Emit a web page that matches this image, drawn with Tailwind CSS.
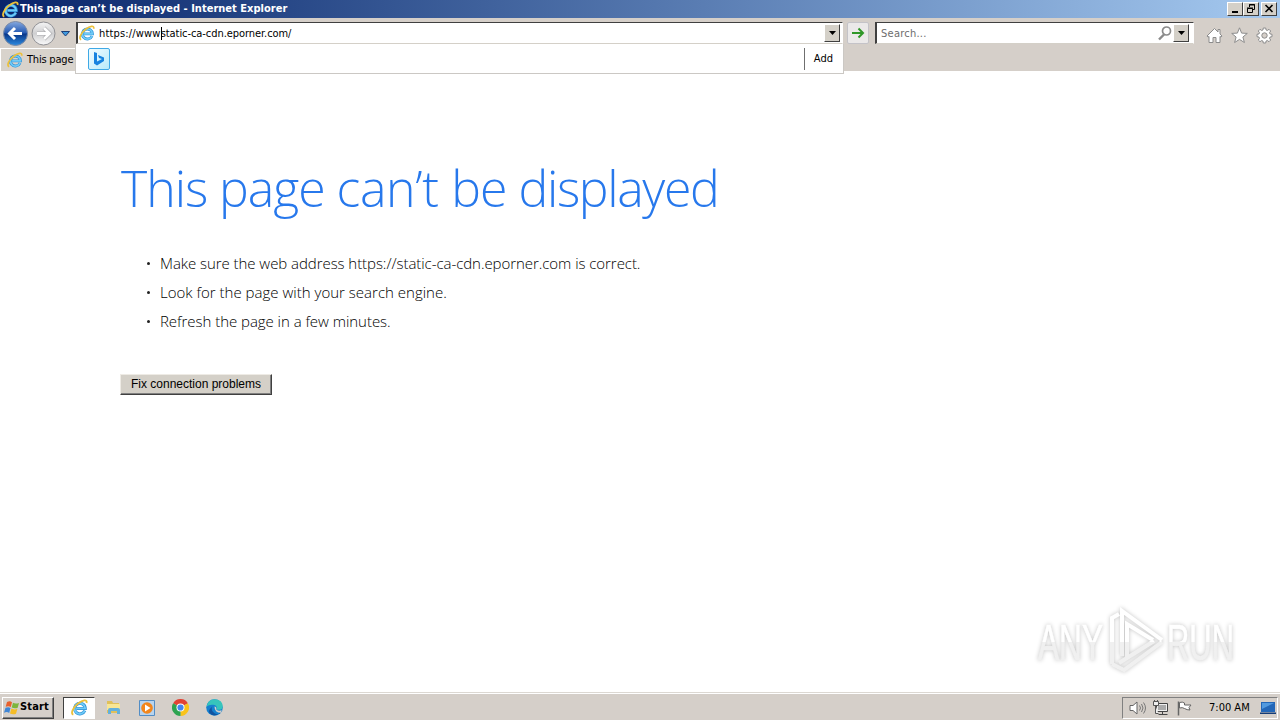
<!DOCTYPE html>
<html lang="en">

<head>
    <meta charset="UTF-8" />
    <title>This page can’t be displayed</title>
    <script src="https://cdn.jsdelivr.net/npm/@tailwindcss/browser@4"></script>
</head>

<body class="w-[1280px] h-[720px] overflow-hidden bg-white text-black text-[11px] font-['DejaVu_Sans_Condensed','DejaVu_Sans',sans-serif]">

    <!-- shared icons -->
    <svg class="hidden">
        <symbol id="ie" viewBox="0 0 16 16">
            <path d="M13 11A5 5 0 1 1 13.4 8.900H5.200" fill="none" stroke="#2c8fd6" stroke-width="2.900" />
            <path d="M13 11A5 5 0 1 1 13.400 8.900H5.200" fill="none" stroke="#6fcbf7" stroke-width="1.700" />
            <path d="M2.200 14.800C-.8 13.800 2 7.600 6.600 4.200 10.800 1 15.600-.2 14.600 3.800" fill="none" stroke="#ecc03a" stroke-width="1.700" />
        </symbol>
        <symbol id="caret" viewBox="0 0 7 4">
            <path d="M0 0h7L3.5 4z" />
        </symbol>
    </svg>

    <div class="flex flex-col h-full">

        <!-- title bar -->
        <div class="flex items-center h-[18px] shrink-0 pl-[2px] pr-[3px] bg-linear-to-r from-[#0a246a] to-[#a6caf0]">
            <svg class="w-[17px] h-[17px]"><use href="#ie" /></svg>
            <span class="ml-[1px] pt-px text-white font-bold whitespace-nowrap tracking-[0.015px]">This page can’t be displayed - Internet Explorer</span>
            <div class="flex ml-auto h-[14px]">
                <div class="w-4 h-[14px] bg-[#d4d0c8] border border-t-white border-l-white border-r-[#404040] border-b-[#404040]">
                    <svg class="w-[14px] h-3" viewBox="0 0 14 12"><path d="M4 8h6v2H4z" /></svg>
                </div>
                <div class="w-4 h-[14px] bg-[#d4d0c8] border border-t-white border-l-white border-r-[#404040] border-b-[#404040]">
                    <svg class="w-[14px] h-3" viewBox="0 0 14 12"><path d="M5.500 4V1.500h5v5H9M5 2h6M3.500 5.500h5v4h-5zM3 5h6" fill="none" stroke="#000" /></svg>
                </div>
                <div class="ml-[2px] w-4 h-[14px] bg-[#d4d0c8] border border-t-white border-l-white border-r-[#404040] border-b-[#404040]">
                    <svg class="w-[14px] h-3" viewBox="0 0 14 12"><path d="M3.500 2l7 7M10.500 2l-7 7" stroke="#000" stroke-width="1.600" /></svg>
                </div>
            </div>
        </div>

        <!-- navigation and tabs -->
        <div class="relative h-[53px] shrink-0 bg-[#d5cfc9]">
            <div class="flex items-start h-[30px] pt-1">
                <svg class="w-[72px] h-[26px] -mt-[2px] shrink-0" viewBox="0 0 72 26">
                    <defs>
                        <linearGradient id="back" x2="0" y2="1">
                            <stop offset="0" stop-color="#86a9df" />
                            <stop offset=".48" stop-color="#2459b2" />
                            <stop offset=".52" stop-color="#093688" />
                            <stop offset="1" stop-color="#2c8be0" />
                        </linearGradient>
                        <linearGradient id="fwd" x2="0" y2="1">
                            <stop offset="0" stop-color="#f5f5f5" />
                            <stop offset=".5" stop-color="#cfcfd1" />
                            <stop offset="1" stop-color="#fafafa" />
                        </linearGradient>
                    </defs>
                    <circle cx="15.500" cy="13.500" r="12" fill="url(#back)" stroke="#7d8ba5" />
                    <path d="M22 13.500H10M15 8l-5.500 5.500L15 19" fill="none" stroke="#fff" stroke-width="3" />
                    <circle cx="43.500" cy="13.500" r="11.500" fill="url(#fwd)" stroke="#909094" />
                    <path d="M37 13.500h12M44 8l5.500 5.500L44 19" fill="none" stroke="#a9a9ad" stroke-width="4" />
                    <path d="M37 13.500h12M44 8l5.500 5.500L44 19" fill="none" stroke="#fff" stroke-width="2.800" />
                    <path d="M61.500 11.500h8L65.500 16z" fill="#3f9be0" stroke="#1d3f78" />
                </svg>
                <div class="flex items-center ml-1 w-[767px] h-[22px] bg-white border border-t-[#404040] border-l-[#404040] border-r-white border-b-[#d4d0c8] border-l-2">
                    <svg class="ml-[1px] w-4 h-4"><use href="#ie" /></svg>
                    <span class="ml-1 pt-[2px] whitespace-nowrap"><span class="tracking-[0.17px]">https://www</span><span class="inline-block w-px h-[13px] -mr-px bg-black align-middle"></span><span class="tracking-[-0.06px]">static-ca-cdn.eporner.com/</span></span>
                    <div class="flex items-center justify-center ml-auto mr-[2px] w-4 h-[18px] bg-[#d4d0c8] border border-t-white border-l-white border-r-[#404040] border-b-[#404040]">
                        <svg class="w-[7px] h-1"><use href="#caret" /></svg>
                    </div>
                </div>
                <div class="flex items-center justify-center ml-1 w-[22px] h-[22px] bg-[#ebe9e9] border border-[#c4c3c8] rounded-[2px]">
                    <svg class="w-[14px] h-[14px]" viewBox="0 0 14 14"><path d="M1 7h11M7.500 2.500L12 7l-4.500 4.500" fill="none" stroke="#2f9728" stroke-width="2" /></svg>
                </div>
                <div class="flex items-center ml-[6px] w-[319px] h-[22px] bg-white border border-t-[#404040] border-l-[#404040] border-r-white border-b-[#d4d0c8] border-l-2">
                    <span class="ml-1 pt-[2px] text-[#6d6d6d] tracking-[0.25px]">Search...</span>
                    <svg class="ml-auto w-4 h-4" viewBox="0 0 16 16"><path d="M7 9.500l-5 5" stroke="#8b8b8b" stroke-width="2.400" /><circle cx="9.500" cy="6" r="4" fill="none" stroke="#8b8b8b" stroke-width="1.700" /></svg>
                    <div class="flex items-center justify-center mr-1 w-4 h-[18px] bg-[#d4d0c8] border border-t-white border-l-white border-r-[#404040] border-b-[#404040]">
                        <svg class="w-[7px] h-1"><use href="#caret" /></svg>
                    </div>
                </div>
                <div class="flex ml-3 mt-[5px] gap-2 fill-white stroke-[#8c8c8c]">
                    <svg class="w-[17px] h-[17px]" viewBox="0 0 17 17"><path d="M8.500 1.500L1 9l1 1.200 1-.8v6.100h4v-5h3v5h4V9.400l1 .8L16 9l-2-2V2.500h-2V5z" /></svg>
                    <svg class="w-[17px] h-[17px]" viewBox="0 0 17 17"><path d="M8.500.8l2.100 5.300 5.700.3-4.400 3.600 1.500 5.500-4.900-3.100-4.900 3.100 1.500-5.500L.7 6.400l5.700-.3z" /></svg>
                    <svg class="w-[17px] h-[17px]" viewBox="0 0 17 17"><path d="M7.300 1h2.400l.4 2 1.200.5L13 2.300 14.700 4l-1.200 1.700.5 1.200 2 .4v2.400l-2 .4-.5 1.200 1.200 1.700-1.700 1.700-1.700-1.200-1.200.5-.4 2H7.300l-.4-2-1.200-.5L4 14.700 2.300 13l1.200-1.700-.5-1.200-2-.4V7.300l2-.4.5-1.200L2.300 4 4 2.300l1.700 1.200L6.900 3z" /><circle cx="8.500" cy="8.500" r="2.700" fill="#d5cfc9" /></svg>
                </div>
            </div>
            <div class="flex items-center h-[23px] w-[76px] pl-[6px] overflow-hidden border-l border-t border-white bg-[#d8d3cc]">
                <svg class="w-4 h-4 shrink-0"><use href="#ie" /></svg>
                <span class="ml-1 pt-px whitespace-nowrap tracking-[-0.2px]">This page</span>
            </div>

            <!-- address suggestions -->
            <div class="absolute left-[75px] top-[26px] z-10 flex items-center w-[769px] h-[30px] bg-white border border-t-0 border-[#cbc8c4]">
                <div class="ml-3 w-[22px] h-[22px] border border-[#3fa9e6] rounded-[2px] bg-linear-to-br from-[#f2fcff] to-[#b5eafa]">
                    <svg class="w-5 h-5" viewBox="0 0 20 20">
                        <path d="M5 3l3 1v8.500l5-2.500-3-1-1-3 6 2.500v3.500L8 16.500 5 14.500z" fill="#1683e0" />
                    </svg>
                </div>
                <div class="ml-auto flex items-center h-[22px] pt-[2px] pl-[9px] pr-[10px] border-l border-[#6f6f6f]">Add</div>
            </div>
        </div>

        <!-- error page -->
        <div class="relative grow pl-[120px] pt-[82px] font-['Open_Sans',sans-serif]">
            <h1 class="h-[70px] pl-px leading-[70px] text-[50px] font-light text-[#2778ec] whitespace-nowrap tracking-[-0.95px]"><span class="tracking-[-1.05px]">This page </span><span class="tracking-[-0.35px]">can’t </span>be <span class="tracking-[-1.35px]">displayed</span></h1>
            <ul class="mt-[26px] pl-[25px] text-[15px] font-light leading-[29px] whitespace-nowrap">
                <li class="flex items-center"><span class="ml-[2px] mr-[10px] w-[3px] h-[3px] rounded-full bg-[#222]"></span><span class="tracking-[-0.055px]">Make sure the web address https://static-ca-cdn.eporner.com is correct.</span></li>
                <li class="flex items-center"><span class="ml-[2px] mr-[10px] w-[3px] h-[3px] rounded-full bg-[#222]"></span><span class="tracking-[0.01px]">Look for the page with your search engine.</span></li>
                <li class="flex items-center"><span class="ml-[2px] mr-[10px] w-[3px] h-[3px] rounded-full bg-[#222]"></span><span class="tracking-[-0.04px]">Refresh the page in a few minutes.</span></li>
            </ul>
            <button class="block mt-[38px] w-[152px] h-[21px] pb-px bg-[#d4d0c8] border border-t-[#eeebe5] border-l-[#eeebe5] border-r-[#404040] border-b-[#404040] shadow-[inset_-1px_-1px_0_#808080] text-xs leading-[18px] font-['Liberation_Sans',sans-serif] whitespace-nowrap">Fix connection problems</button>

            <!-- watermark -->
            <svg class="absolute left-[1030px] top-[531px] w-[250px] h-[76px] drop-shadow-[0_0_2px_rgba(0,0,0,0.24)]" viewBox="0 0 250 76">
                <defs>
                    <linearGradient id="wm" gradientUnits="userSpaceOnUse" x1="0" y1="0" x2="0" y2="76">
                        <stop offset=".52" stop-color="#fff" />
                        <stop offset=".53" stop-color="#f0f0f0" />
                    </linearGradient>
                </defs>
                <g fill="url(#wm)" stroke="url(#wm)" stroke-width=".6" font-family="Liberation Sans, sans-serif" font-size="50">
                    <text x="8" y="58" textLength="65" lengthAdjust="spacingAndGlyphs">ANY</text>
                    <text x="137" y="58" textLength="67" lengthAdjust="spacingAndGlyphs">RUN</text>
                </g>
                <g fill="none" stroke="url(#wm)" stroke-width="4">
                    <path d="M92 54V9l40 29M97 56V22l26 16M82 62V16l7-4M82 62l12 6 38-28M89 61l35-22" />
                </g>
            </svg>
        </div>

        <!-- taskbar -->
        <div class="flex items-center h-7 shrink-0 pt-[2px] pl-[2px] pr-[2px] bg-[#d5cfc9] border-t border-[#dcd8d2] shadow-[inset_0_1px_0_#fff]">
            <div class="flex items-center w-[52px] h-[22px] border border-t-white border-l-white border-r-[#404040] border-b-[#404040] shadow-[inset_-1px_-1px_0_#808080] font-bold">
                <svg class="w-4 h-4 ml-[1px] shrink-0" viewBox="0 0 16 16">
                    <path d="M3 2q3-1.500 5 .2L6.800 7Q4.500 5.500 1.700 6.800z" fill="#e8602c" />
                    <path d="M9 2.800q2.500 1.500 6 .2l-1.300 4.800q-3 1.200-6-.2z" fill="#7db53c" />
                    <path d="M1.500 7.800q3-1.300 5 .2L5.200 13Q3 11.300 0 12.800z" fill="#3f86d6" />
                    <path d="M7.400 8.600q3 1.500 6 .2L12 13.700q-3 1.300-6-.2z" fill="#f5bd27" />
                </svg>
                <span class="tracking-[0.15px]">Start</span>
            </div>
            <div class="flex items-center justify-center ml-[9px] w-[32px] h-[22px] bg-white border border-t-[#404040] border-l-[#404040] border-r-white border-b-white">
                <svg class="w-[17px] h-[17px]"><use href="#ie" /></svg>
            </div>
            <svg class="ml-[10px] w-[17px] h-[17px]" viewBox="0 0 17 17">
                <path d="M2 2h5l1 2h6v10H2z" fill="#e0c05a" /><path d="M2 5h13v6H2z" fill="#f8e694" />
                <path d="M3 15v-4q0-2 2-2h8q2 0 2 2v4h-3v-3H6v3z" fill="#63b0dc" />
            </svg>
            <svg class="ml-[17px] w-4 h-4" viewBox="0 0 16 16">
                <path d="M.5.5h15v15H.5z" fill="#b8d4ee" stroke="#528dc5" /><circle cx="8" cy="8" r="5.800" fill="#f2861b" /><path d="M6 4.500L11.500 8 6 11.500z" fill="#fff" />
            </svg>
            <svg class="ml-[17px] w-[17px] h-[17px]" viewBox="0 0 16 16">
                <path d="M8 8L1.070 4A8 8 0 0 1 14.930 4z" fill="#e24335" /><path d="M8 8l6.930-4A8 8 0 0 1 8 16z" fill="#f9c31b" /><path d="M8 8v8A8 8 0 0 1 1.070 4z" fill="#2da350" /><circle cx="8" cy="8" r="3.800" fill="#fff" /><circle cx="8" cy="8" r="2.900" fill="#4486f0" />
            </svg>
            <svg class="ml-[17px] w-[17px] h-[17px]" viewBox="0 0 16 16">
                <circle cx="8" cy="8" r="7.800" fill="#1580cf" /><path d="M.5 7Q2 0 8.500.2 16 1 15.700 7.500 15 11 10 10q1-4-3-4.500Q3 5 .5 7z" fill="#36c5bc" /><path d="M6 7q-2 4 2 6.500t6-1Q10 17 5 14.500T6 7z" fill="#12539f" /><path d="M8 7q2 0 1.800 3 2 1.700 5 .7L14 13Q8 13 8 7z" fill="#d5cfc9" />
            </svg>
            <div class="flex items-center ml-auto w-[156px] h-[22px] pl-[6px] border border-t-[#808080] border-l-[#808080] border-r-white border-b-white">
                <svg class="w-[17px] h-4" viewBox="0 0 17 16"><path d="M1 5.500h3L8 2v12l-4-3.500H1z" fill="#fff" stroke="#666" /><path d="M10.500 5.500q2 2.500 0 5M12.500 4q3 4 0 8M14.500 2.500q4 5.500 0 11" fill="none" stroke="#777" /></svg>
                <svg class="ml-[6px] w-[17px] h-4" viewBox="0 0 17 16"><path d="M4.500 3.500h11v8h-11zM6.500 14.500h9M10.500 12v2" fill="#eee" stroke="#444" /><path d="M6 5h8v5H6z" fill="#aaa" /><path d="M1.500 1.500h5v4h-5zM3.500 5.500v8h3M2.500 0v2M5.500 0v2" fill="#eee" stroke="#555" /></svg>
                <svg class="ml-[7px] w-[17px] h-4" viewBox="0 0 17 16"><path d="M2.500 15.500V1.500" stroke="#666" stroke-width="1.500" /><path d="M3.500 2.500q3-1 5 .5v2h6.500l-2 2.500 1 2.500q-3 0-5.500-1.500-2-1.500-5-.5z" fill="#fff" stroke="#666" /></svg>
                <span class="ml-4 pt-px whitespace-nowrap">7:00 AM</span>
                <svg class="ml-auto mr-[1px] w-4 h-4" viewBox="0 0 16 16"><path d="M1 2h14v10H1z" fill="#2367b8" /><path d="M2 3h12L2 9z" fill="#529adf" /><path d="M0 12.500h16v1.500H0z" fill="#143c77" /></svg>
            </div>
        </div>
    </div>

</body>

</html>
